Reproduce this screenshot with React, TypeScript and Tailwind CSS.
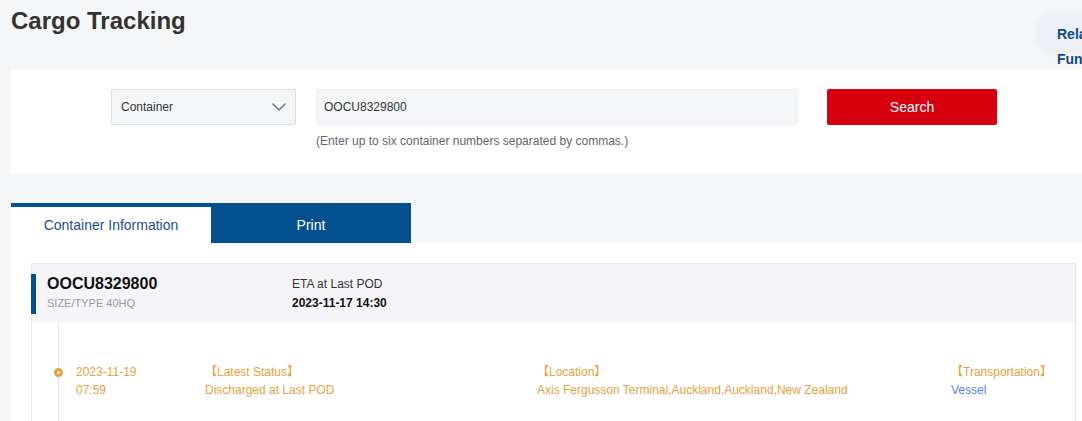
import React from "react";

const font = { fontFamily: '"Liberation Sans", Arial, "Noto Sans CJK SC", sans-serif' };

export default function App() {
  return (
    <div className="relative w-[1082px] h-[421px] overflow-hidden bg-[#f5f6f8] text-[#333]" style={font}>
      <div className="ml-[11px] w-[1085px]">
        <div className="h-[69px] pt-[7px]">
          <h1 className="text-[24px] leading-[28px] font-bold text-[#333]">Cargo Tracking</h1>
        </div>

        <div className="bg-white h-[104px] pt-[20px] pl-[100px]">
          <div className="flex items-start">
            <div className="w-[185px] h-[36px] border border-[#dcdfe6] bg-[#f5f6f8] rounded-[2px] flex items-center justify-between pl-[9px] pr-[8px]">
              <span className="text-[12px] text-[#333]">Container</span>
              <svg width="16" height="10" viewBox="0 0 16 10" fill="none">
                <polyline points="2,2 8,8 14,2" stroke="#6b7a90" strokeWidth="1.6" strokeLinecap="round" strokeLinejoin="round" />
              </svg>
            </div>
            <div className="ml-[20px] w-[482px]">
              <div className="h-[36px] border border-[#eceef2] bg-[#f5f6f8] rounded-[2px] flex items-center pl-[7px]">
                <span className="text-[12px] text-[#333]">OOCU8329800</span>
              </div>
              <div className="mt-[8px] text-[12px] leading-[16px] text-[#666]">(Enter up to six container numbers separated by commas.)</div>
            </div>
            <button className="ml-[29px] w-[170px] h-[36px] bg-[#d7000f] rounded-[2px] text-white text-[14px]">Search</button>
          </div>
        </div>

        <div className="mt-[30px] flex h-[40px]">
          <div className="w-[200px] bg-white border-t-4 border-[#04508f] flex items-center justify-center text-[14px] text-[#1b4f8c]">
            Container Information
          </div>
          <div className="w-[200px] bg-[#04508f] pt-[4px] flex items-center justify-center text-[14px] text-white">Print</div>
        </div>

        <div className="bg-white pt-[20px] px-[20px] h-[200px]">
          <div className="border border-[#e6e6e6] h-[200px]">
            <div className="h-[59px] bg-[#f5f5f9] flex items-start pt-[10px]">
              <div className="w-[5px] h-[40px] bg-[#04508f] -ml-px"></div>
              <div className="ml-[11px] w-[245px]">
                <div className="text-[16px] leading-[20px] font-bold text-[#111]">OOCU8329800</div>
                <div className="text-[11px] leading-[19px] text-[#999]">SIZE/TYPE 40HQ</div>
              </div>
              <div>
                <div className="text-[12px] leading-[20px] text-[#333]">ETA at Last POD</div>
                <div className="text-[12px] leading-[19px] font-bold text-[#111]">2023-11-17 14:30</div>
              </div>
            </div>
            <div className="relative h-[140px] pl-[44px]">
              <div className="absolute left-[26px] top-0 bottom-0 w-px bg-[#e4e7ed]"></div>
              <div className="absolute left-[22px] top-[45px] w-[9px] h-[9px] rounded-full border-[3px] border-[#e6a23c] bg-white"></div>
              <div className="pt-[40px] flex text-[12px] leading-[18px] text-[#e6a23c]">
                <div className="w-[129px]">
                  <div>2023-11-19</div>
                  <div>07:59</div>
                </div>
                <div className="w-[332px]">
                  <div>【Latest Status】</div>
                  <div>Discharged at Last POD</div>
                </div>
                <div className="w-[414px]">
                  <div>【Location】</div>
                  <div>Axis Fergusson Terminal,Auckland,Auckland,New Zealand</div>
                </div>
                <div>
                  <div>【Transportation】</div>
                  <div className="text-[#4f86e0]">Vessel</div>
                </div>
              </div>
            </div>
          </div>
        </div>
      </div>

      <div className="absolute left-[1037px] top-[12px] w-[80px] h-[38px] rounded-l-full bg-[#edf0f5] shadow-[0_2px_8px_rgba(0,0,0,0.06)]"></div>
      <div className="absolute left-[1057px] top-[22px] text-[14px] leading-[25px] font-bold text-[#0e4a8a]">
        <div>Related</div>
        <div>Functions</div>
      </div>
    </div>
  );
}
